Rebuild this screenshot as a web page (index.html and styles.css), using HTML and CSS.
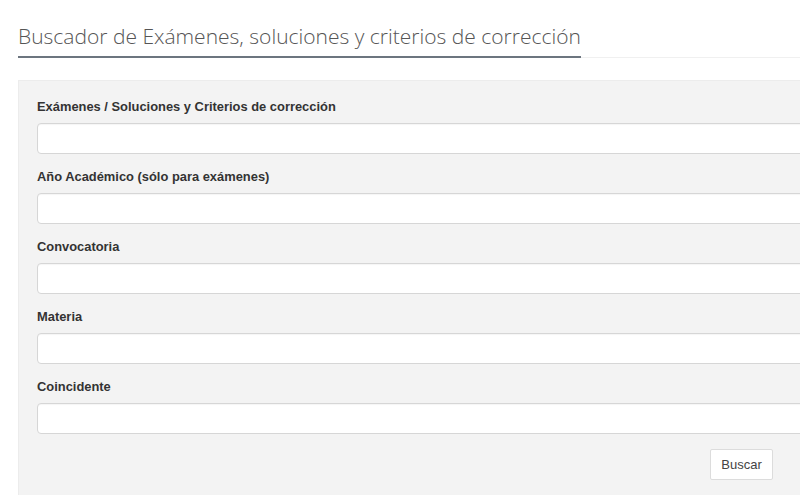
FILE: index.html
```html
<!DOCTYPE html>
<html lang="es">
<head>
    <meta charset="UTF-8">
    <meta name="viewport" content="width=device-width, initial-scale=1.0">
    <title>Buscador de Exámenes</title>
    <link rel="stylesheet" href="styles.css">
</head>
<body>
    <div class="page-header">
        <h1>Buscador de Exámenes, soluciones y criterios de corrección</h1>
    </div>
    <form class="search-panel">
        <div class="form-group">
            <label for="tipo">Exámenes / Soluciones y Criterios de corrección</label>
            <input type="text" id="tipo" name="tipo">
        </div>
        <div class="form-group">
            <label for="anio">Año Académico (sólo para exámenes)</label>
            <input type="text" id="anio" name="anio">
        </div>
        <div class="form-group">
            <label for="convocatoria">Convocatoria</label>
            <input type="text" id="convocatoria" name="convocatoria">
        </div>
        <div class="form-group">
            <label for="materia">Materia</label>
            <input type="text" id="materia" name="materia">
        </div>
        <div class="form-group">
            <label for="coincidente">Coincidente</label>
            <input type="text" id="coincidente" name="coincidente">
        </div>
        <div class="buttons">
            <button type="submit">Buscar</button>
        </div>
    </form>
</body>
</html>
```

FILE: styles.css
```css
body {
    font-family: "Liberation Sans", Arial, sans-serif;
    margin: 0;
    padding: 0 0 0 18px;
    background: #fff;
    overflow: hidden;
}
.page-header {
    padding-top: 22px;
    border-bottom: 1px solid #f0f0f0;
    margin-bottom: 22px;
}
h1 {
    display: inline-block;
    font-family: "Open Sans", sans-serif;
    font-weight: 300;
    font-size: 21px;
    color: #555;
    margin: 0 0 -1px 0;
    padding: 0 0 6px 0;
    border-bottom: 2px solid #6c757f;
    line-height: 28px;
}
.search-panel {
    background: #f3f3f3;
    border-top: 1px solid #ececec;
    border-left: 1px solid #ececec;
    padding: 18px 0 15px 18px;
    width: 800px;
}
.form-group {
    margin-bottom: 15px;
}
label {
    display: block;
    font-weight: bold;
    font-size: 12.9px;
    color: #333;
    line-height: 16px;
    margin-bottom: 8px;
}
input[type="text"] {
    display: block;
    width: 100%;
    height: 31px;
    border: 1px solid #d6d6d6;
    border-radius: 4px;
    background: #fff;
    box-sizing: border-box;
    box-shadow: inset 0 1px 1px rgba(0,0,0,0.04);
}
.buttons {
    width: 736px;
    text-align: right;
}
button {
    font-family: "Liberation Sans", Arial, sans-serif;
    font-size: 13px;
    color: #444;
    background: #fff;
    border: 1px solid #dcdcdc;
    border-radius: 2px;
    height: 31px;
    width: 63px;
    cursor: pointer;
}
```
